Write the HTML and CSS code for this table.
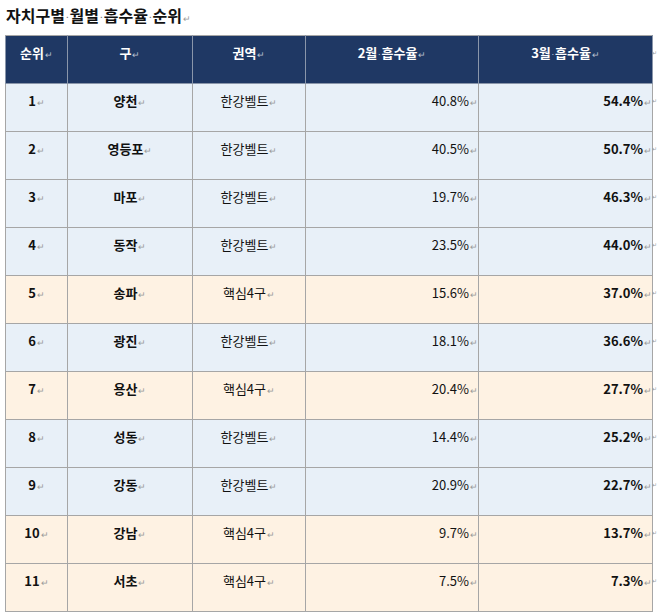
FILE: index.html
```html
<!DOCTYPE html>
<html lang="ko">
<head>
<meta charset="utf-8">
<link rel="stylesheet" href="styles.css">
</head>
<body>
<h1 class="title">자치구별<span class="dot">·</span>월별<span class="dot">·</span>흡수율<span class="dot">·</span>순위<span class="rm">↵</span></h1>
<table class="tbl">
<colgroup>
<col class="c1"><col class="c2"><col class="c3"><col class="c4"><col class="c5">
</colgroup>
<thead>
<tr>
<th>순위<span class="rm">↵</span></th>
<th>구<span class="rm">↵</span></th>
<th>권역<span class="rm">↵</span></th>
<th>2월<span class="dot">·</span>흡수율<span class="rm">↵</span></th>
<th class="last">3월<span class="dot">·</span>흡수율<span class="rm">↵</span><span class="eor">↵</span></th>
</tr>
</thead>
<tbody>
<tr class="blue"><td class="b">1<span class="rm">↵</span></td><td class="b">양천<span class="rm">↵</span></td><td>한강벨트<span class="rm">↵</span></td><td class="r">40.8%<span class="rm">↵</span></td><td class="r b last">54.4%<span class="rm">↵</span><span class="eor">↵</span></td></tr>
<tr class="blue"><td class="b">2<span class="rm">↵</span></td><td class="b">영등포<span class="rm">↵</span></td><td>한강벨트<span class="rm">↵</span></td><td class="r">40.5%<span class="rm">↵</span></td><td class="r b last">50.7%<span class="rm">↵</span><span class="eor">↵</span></td></tr>
<tr class="blue"><td class="b">3<span class="rm">↵</span></td><td class="b">마포<span class="rm">↵</span></td><td>한강벨트<span class="rm">↵</span></td><td class="r">19.7%<span class="rm">↵</span></td><td class="r b last">46.3%<span class="rm">↵</span><span class="eor">↵</span></td></tr>
<tr class="blue"><td class="b">4<span class="rm">↵</span></td><td class="b">동작<span class="rm">↵</span></td><td>한강벨트<span class="rm">↵</span></td><td class="r">23.5%<span class="rm">↵</span></td><td class="r b last">44.0%<span class="rm">↵</span><span class="eor">↵</span></td></tr>
<tr class="orange"><td class="b">5<span class="rm">↵</span></td><td class="b">송파<span class="rm">↵</span></td><td>핵심4구<span class="rm">↵</span></td><td class="r">15.6%<span class="rm">↵</span></td><td class="r b last">37.0%<span class="rm">↵</span><span class="eor">↵</span></td></tr>
<tr class="blue"><td class="b">6<span class="rm">↵</span></td><td class="b">광진<span class="rm">↵</span></td><td>한강벨트<span class="rm">↵</span></td><td class="r">18.1%<span class="rm">↵</span></td><td class="r b last">36.6%<span class="rm">↵</span><span class="eor">↵</span></td></tr>
<tr class="orange"><td class="b">7<span class="rm">↵</span></td><td class="b">용산<span class="rm">↵</span></td><td>핵심4구<span class="rm">↵</span></td><td class="r">20.4%<span class="rm">↵</span></td><td class="r b last">27.7%<span class="rm">↵</span><span class="eor">↵</span></td></tr>
<tr class="blue"><td class="b">8<span class="rm">↵</span></td><td class="b">성동<span class="rm">↵</span></td><td>한강벨트<span class="rm">↵</span></td><td class="r">14.4%<span class="rm">↵</span></td><td class="r b last">25.2%<span class="rm">↵</span><span class="eor">↵</span></td></tr>
<tr class="blue"><td class="b">9<span class="rm">↵</span></td><td class="b">강동<span class="rm">↵</span></td><td>한강벨트<span class="rm">↵</span></td><td class="r">20.9%<span class="rm">↵</span></td><td class="r b last">22.7%<span class="rm">↵</span><span class="eor">↵</span></td></tr>
<tr class="orange"><td class="b">10<span class="rm">↵</span></td><td class="b">강남<span class="rm">↵</span></td><td>핵심4구<span class="rm">↵</span></td><td class="r">9.7%<span class="rm">↵</span></td><td class="r b last">13.7%<span class="rm">↵</span><span class="eor">↵</span></td></tr>
<tr class="orange"><td class="b">11<span class="rm">↵</span></td><td class="b">서초<span class="rm">↵</span></td><td>핵심4구<span class="rm">↵</span></td><td class="r">7.5%<span class="rm">↵</span></td><td class="r b last">7.3%<span class="rm">↵</span><span class="eor">↵</span></td></tr>
</tbody>
</table>
</body>
</html>
```
FILE: styles.css
```css
html, body {
  margin: 0;
  padding: 0;
  background: #ffffff;
}
body {
  font-family: "Noto Sans CJK KR", "Liberation Sans", sans-serif;
  color: #111111;
  padding: 0 0 0 5px;
}
.title {
  margin: 0;
  padding: 4px 0 0 1px;
  height: 35px;
  box-sizing: border-box;
  font-size: 16px;
  line-height: 22px;
  font-weight: 700;
  letter-spacing: 0;
}
.dot {
  font-weight: 400;
  color: #555555;
  font-size: 0.6em;
  padding: 0 1px;
  vertical-align: 0.15em;
}
.rm {
  font-size: 9px;
  font-weight: 400;
  color: #9a9a9a;
  margin-left: 1px;
  vertical-align: 0.05em;
}
.tbl {
  border-collapse: collapse;
  table-layout: fixed;
  width: 648px;
  font-size: 13px;
}
.c1 { width: 62px; }
.c2 { width: 125px; }
.c3 { width: 113px; }
.c4 { width: 173px; }
.c5 { width: 174px; }
.tbl tr { height: 48px; }
.tbl th, .tbl td {
  border: 1px solid #a6a6a6;
  vertical-align: top;
  text-align: center;
  padding: 7px 7px 0 7px;
  line-height: 20px;
  white-space: nowrap;
}
.tbl th {
  background: #1f3864;
  color: #ffffff;
  font-weight: 700;
  border-color: #8a96aa;
  border-top-color: #a6a6a6;
}
.tbl th .rm { color: #b8c0d0; }
.tbl th .dot { color: #c8d0e0; }
.blue td { background: #e8f0f8; }
.orange td { background: #fef2e3; }
.tbl td.b { font-weight: 700; }
.tbl td.r { text-align: right; padding-right: 0; }
.last { position: relative; }
.eor {
  position: absolute;
  left: 100%;
  top: 7px;
  margin-left: 0;
  font-size: 6px;
  font-weight: 400;
  color: #9a9a9a;
  line-height: 20px;
}
```
